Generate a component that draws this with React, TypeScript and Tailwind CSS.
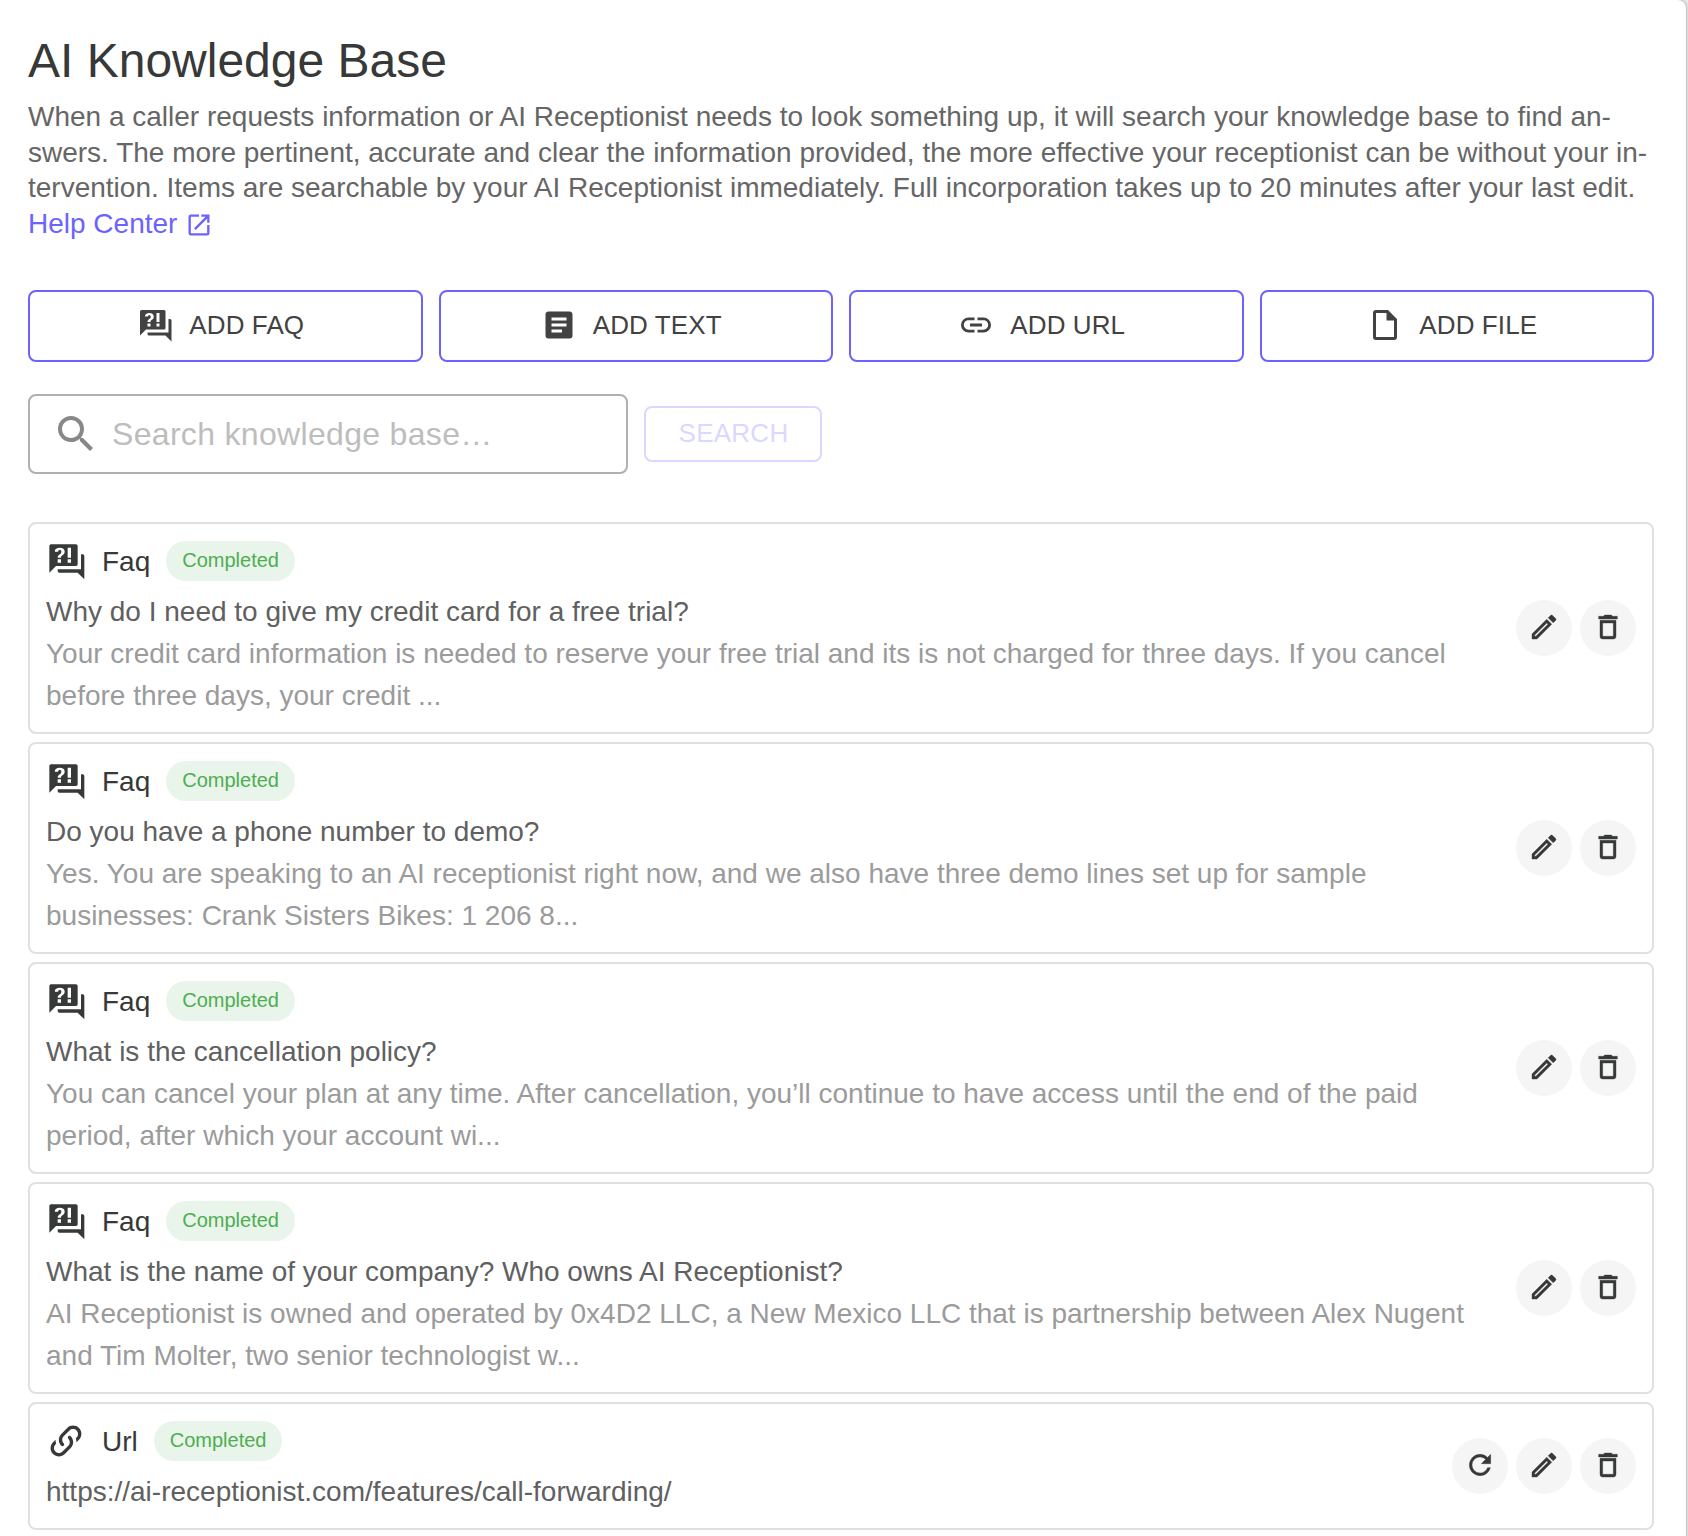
import { useState } from 'react';
import clsx from 'clsx';

type ItemKind = 'Faq' | 'Url';

type KnowledgeItem = {
  id: number;
  kind: ItemKind;
  status: string;
  title: string;
  preview?: string[];
};

const icons = {
  faq: 'M18,15H6L2,19V3A1,1 0 0,1 3,2H18A1,1 0 0,1 19,3V14A1,1 0 0,1 18,15M23,9V23L19,19H8A1,1 0 0,1 7,18V17H21V8H22A1,1 0 0,1 23,9M8.19,4C7.32,4 6.62,4.2 6.08,4.59C5.56,5 5.3,5.57 5.31,6.36L5.32,6.39H7.25C7.26,6.09 7.35,5.86 7.53,5.7C7.71,5.55 7.93,5.47 8.19,5.47C8.5,5.47 8.76,5.57 8.94,5.75C9.12,5.94 9.2,6.2 9.2,6.5C9.2,6.82 9.13,7.09 8.97,7.32C8.83,7.55 8.62,7.75 8.36,7.91C7.85,8.25 7.5,8.55 7.31,8.82C7.11,9.08 7,9.5 7,10H9C9,9.69 9.04,9.44 9.13,9.26C9.22,9.08 9.39,8.9 9.64,8.74C10.09,8.5 10.46,8.21 10.75,7.81C11.04,7.41 11.19,7 11.19,6.5C11.19,5.74 10.92,5.13 10.38,4.68C9.85,4.23 9.12,4 8.19,4M7,11V13H9V11H7M13,13H15V11H13V13M13,4V10H15V4H13Z',
  text: 'M14,17H7V15H14M17,13H7V11H17M17,9H7V7H17M19,3H5C3.89,3 3,3.89 3,5V19A2,2 0 0,0 5,21H19A2,2 0 0,0 21,19V5C21,3.89 20.1,3 19,3Z',
  link: 'M3.9,12C3.9,10.29 5.29,8.9 7,8.9H11V7H7A5,5 0 0,0 2,12A5,5 0 0,0 7,17H11V15.1H7C5.29,15.1 3.9,13.71 3.9,12M8,13H16V11H8V13M17,7H13V8.9H17C18.71,8.9 20.1,10.29 20.1,12C20.1,13.71 18.71,15.1 17,15.1H13V17H17A5,5 0 0,0 22,12A5,5 0 0,0 17,7Z',
  linkVariant:
    'M10.59,13.41C11,13.8 11,14.44 10.59,14.83C10.2,15.22 9.56,15.22 9.17,14.83C7.22,12.88 7.22,9.71 9.17,7.76V7.76L12.71,4.22C14.66,2.27 17.83,2.27 19.78,4.22C21.73,6.17 21.73,9.34 19.78,11.29L18.29,12.78C18.3,11.96 18.17,11.14 17.89,10.36L18.36,9.88C19.54,8.71 19.54,6.81 18.36,5.64C17.19,4.46 15.29,4.46 14.12,5.64L10.59,9.17C9.41,10.34 9.41,12.24 10.59,13.41M13.41,9.17C13.8,8.78 14.44,8.78 14.83,9.17C16.78,11.12 16.78,14.29 14.83,16.24V16.24L11.29,19.78C9.34,21.73 6.17,21.73 4.22,19.78C2.27,17.83 2.27,14.66 4.22,12.71L5.71,11.22C5.7,12.04 5.83,12.86 6.11,13.65L5.64,14.12C4.46,15.29 4.46,17.19 5.64,18.36C6.81,19.54 8.71,19.54 9.88,18.36L13.41,14.83C14.59,13.66 14.59,11.76 13.41,10.59C13,10.2 13,9.56 13.41,9.17Z',
  file: 'M14,2H6A2,2 0 0,0 4,4V20A2,2 0 0,0 6,22H18A2,2 0 0,0 20,20V8L14,2M18,20H6V4H13V9H18V20Z',
  magnify:
    'M9.5,3A6.5,6.5 0 0,1 16,9.5C16,11.11 15.41,12.59 14.44,13.73L14.71,14H15.5L20.5,19L19,20.5L14,15.5V14.71L13.73,14.44C12.59,15.41 11.11,16 9.5,16A6.5,6.5 0 0,1 3,9.5A6.5,6.5 0 0,1 9.5,3M9.5,5C7,5 5,7 5,9.5C5,12 7,14 9.5,14C12,14 14,12 14,9.5C14,7 12,5 9.5,5Z',
  openInNew:
    'M14,3V5H17.59L7.76,14.83L9.17,16.24L19,6.41V10H21V3M19,19H5V5H12V3H5C3.89,3 3,3.9 3,5V19A2,2 0 0,0 5,21H19A2,2 0 0,0 21,19V12H19V19Z',
  pencil:
    'M14.06,9L15,9.94L5.92,19H5V18.08L14.06,9M17.66,3C17.41,3 17.15,3.1 16.96,3.29L15.13,5.12L18.88,8.87L20.71,7.04C21.1,6.65 21.1,6 20.71,5.63L18.37,3.29C18.17,3.09 17.92,3 17.66,3M14.06,6.19L3,17.25V21H6.75L17.81,9.94L14.06,6.19Z',
  trash: 'M6,19A2,2 0 0,0 8,21H16A2,2 0 0,0 18,19V7H6V19M8,9H16V19H8V9M15.5,4L14.5,3H9.5L8.5,4H5V6H19V4H15.5Z',
  refresh:
    'M17.65,6.35C16.2,4.9 14.21,4 12,4A8,8 0 0,0 4,12A8,8 0 0,0 12,20C15.73,20 18.84,17.45 19.73,14H17.65C16.83,16.33 14.61,18 12,18A6,6 0 0,1 6,12A6,6 0 0,1 12,6C13.66,6 15.14,6.69 16.22,7.78L13,11H20V4L17.65,6.35Z'
};

type IconName = keyof typeof icons;

const addButtons: { label: string; icon: IconName }[] = [
  { label: 'Add FAQ', icon: 'faq' },
  { label: 'Add Text', icon: 'text' },
  { label: 'Add URL', icon: 'link' },
  { label: 'Add File', icon: 'file' }
];

const items: KnowledgeItem[] = [
  {
    id: 1,
    kind: 'Faq',
    status: 'Completed',
    title: 'Why do I need to give my credit card for a free trial?',
    preview: [
      'Your credit card information is needed to reserve your free trial and its is not charged for three days. If you cancel',
      'before three days, your credit ...'
    ]
  },
  {
    id: 2,
    kind: 'Faq',
    status: 'Completed',
    title: 'Do you have a phone number to demo?',
    preview: [
      'Yes. You are speaking to an AI receptionist right now, and we also have three demo lines set up for sample',
      'businesses: Crank Sisters Bikes: 1 206 8...'
    ]
  },
  {
    id: 3,
    kind: 'Faq',
    status: 'Completed',
    title: 'What is the cancellation policy?',
    preview: [
      'You can cancel your plan at any time. After cancellation, you’ll continue to have access until the end of the paid',
      'period, after which your account wi...'
    ]
  },
  {
    id: 4,
    kind: 'Faq',
    status: 'Completed',
    title: 'What is the name of your company? Who owns AI Receptionist?',
    preview: [
      'AI Receptionist is owned and operated by 0x4D2 LLC, a New Mexico LLC that is partnership between Alex Nugent',
      'and Tim Molter, two senior technologist w...'
    ]
  },
  {
    id: 5,
    kind: 'Url',
    status: 'Completed',
    title: 'https://ai-receptionist.com/features/call-forwarding/'
  }
];

export default function App() {
  const [query, setQuery] = useState('');

  return (
    <div className="h-[1536px] w-full overflow-hidden bg-[#e8e8e8] font-['Liberation_Sans',Arial,sans-serif]">
      <main className="mr-0.5 h-[1600px] rounded-tr-lg bg-white pr-8 pl-7 pt-7 shadow-[0_0_3px_rgba(0,0,0,0.4)]">
        <h1 className="text-[48px] leading-[66px] text-[#373938]">AI Knowledge Base</h1>

        <p className="mt-[5px] h-[141px] text-[28px] leading-[35.6px] whitespace-nowrap text-[#666666]">
          When a caller requests information or AI Receptionist needs to look something up, it will search your
          knowledge base to find an-
          <br />
          swers. The more pertinent, accurate and clear the information provided, the more effective your receptionist
          can be without your in-
          <br />
          tervention. Items are searchable by your AI Receptionist immediately. Full incorporation takes up to 20
          minutes after your last edit.
          <br />
          <a href="#help" className="inline-flex items-center gap-2 text-[#6c63ff]">
            Help Center
            <Icon name="openInNew" className="mt-0.5 size-7" />
          </a>
        </p>

        <div className="mt-[50px] grid grid-cols-4 gap-4">
          {addButtons.map((button) => (
            <button
              key={button.label}
              type="button"
              className="flex h-[72px] items-center justify-center rounded-lg border-2 border-[#6c63ff] pb-0.5 text-[26px] tracking-[0.1px] text-[#424242] uppercase"
            >
              <Icon name={button.icon} className="mr-4 -ml-[9px] size-9" />
              {button.label}
            </button>
          ))}
        </div>

        <div className="mt-8 flex items-center gap-4">
          <label className="flex h-20 w-[600px] items-center gap-3 rounded-lg border-2 border-[#b0b0b0] pr-6 pl-[22px]">
            <Icon name="magnify" className="size-12 text-[#888888]" />
            <input
              value={query}
              onChange={(event) => setQuery(event.target.value)}
              placeholder="Search knowledge base…"
              className="min-w-0 flex-1 text-[32px] tracking-[0.01em] text-[#373938] outline-none placeholder:text-[#bdbdbd]"
            />
          </label>

          <button
            type="button"
            disabled={!query}
            className="h-14 w-[178px] rounded-lg border-2 border-[#6c63ff] pb-0.5 pl-px text-[26px] tracking-[0.25px] text-[#6c63ff] uppercase disabled:border-[#dad8ff] disabled:text-[#dad8ff]"
          >
            Search
          </button>
        </div>

        <div className="mt-12 flex flex-col gap-2">
          {items.map((item) => (
            <ItemCard key={item.id} item={item} />
          ))}
        </div>
      </main>
    </div>
  );
}

function ItemCard({ item }: { item: KnowledgeItem }) {
  return (
    <article className="flex items-center justify-between rounded-lg border-2 border-[#e0e0e0] px-4 text-[28px] leading-[42px]">
      <div className="pt-4 pb-[15px] whitespace-nowrap">
        <div className="mb-[9px] flex h-[42px] items-center text-[#373938]">
          <Icon name={item.kind === 'Faq' ? 'faq' : 'linkVariant'} className="mr-4 size-10" />
          <span className="pt-0.5">{item.kind}</span>
          <span className="ml-4 h-10 rounded-full bg-[#e9f4ea] px-4 text-xl leading-[38px] text-[#4caf50]">
            {item.status}
          </span>
        </div>

        <h2 className="text-[#606060]">{item.title}</h2>

        {item.preview?.map((line) => (
          <p key={line} className="text-[#9b9b9b]">
            {line}
          </p>
        ))}
      </div>

      <div className="flex gap-2">
        {item.kind === 'Url' ? <RoundButton label="Refresh" icon="refresh" /> : null}
        <RoundButton label="Edit" icon="pencil" />
        <RoundButton label="Delete" icon="trash" />
      </div>
    </article>
  );
}

function RoundButton({ label, icon }: { label: string; icon: IconName }) {
  return (
    <button
      type="button"
      aria-label={label}
      className="flex size-14 items-center justify-center rounded-full bg-[#f5f5f5] pb-0.5 text-[#373938]"
    >
      <Icon name={icon} className="size-8 stroke-current stroke-[0.3]" />
    </button>
  );
}

function Icon({ name, className }: { name: IconName; className?: string }) {
  return (
    <svg viewBox="0 0 24 24" fill="currentColor" aria-hidden="true" className={clsx('shrink-0', className)}>
      <path d={icons[name]} />
    </svg>
  );
}
